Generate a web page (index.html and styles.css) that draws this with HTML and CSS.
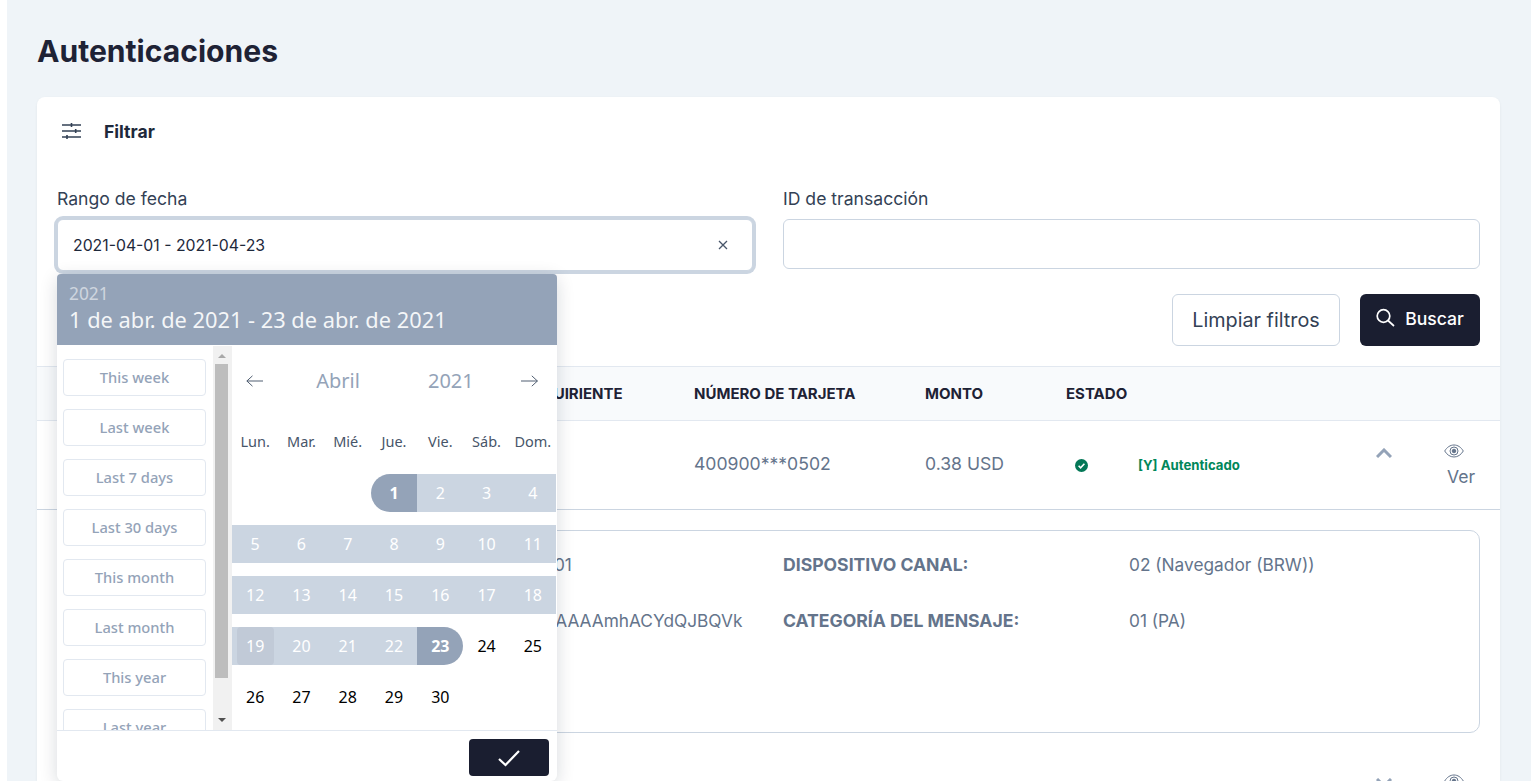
FILE: index.html
```html
<!DOCTYPE html>
<html lang="es">
    <head>
        <meta charset="UTF-8">
        <meta name="viewport" content="width=device-width, initial-scale=1.0">
        <title>Autenticaciones</title>
        <link rel="stylesheet" href="styles.css">
    </head>
    <body>
        <div class="sidebar"></div>
        <main class="main">
            <h1 class="title">Autenticaciones</h1>

            <section class="card">
                <div class="filter-head">
                    <svg class="filter-icon" width="20" height="18" viewBox="0 0 20 18" fill="none" stroke="#334155" stroke-width="1.6">
                        <path d="M0 3h19M0 9h19M0 15h19"/>
                        <path d="M9.500 1v4M13.700 7v4M5 13v4"/>
                    </svg>
                    <span>Filtrar</span>
                </div>

                <div class="filter-form">
                    <div class="field">
                        <label class="field-label">Rango de fecha</label>
                        <div class="input input-focus">
                            <span>2021-04-01 - 2021-04-23</span>
                            <svg width="10" height="10" viewBox="0 0 10 10" stroke="#475569" stroke-width="1.3"><path d="M1 1l8 8M9 1l-8 8"/></svg>
                        </div>

                        <div class="picker">
                            <div class="picker-head">
                                <div class="picker-year">2021</div>
                                <div class="picker-range">1 de abr. de 2021 - 23 de abr. de 2021</div>
                            </div>
                            <div class="picker-body">
                                <div class="shortcuts">
                                    <button class="shortcut">This week</button>
                                    <button class="shortcut">Last week</button>
                                    <button class="shortcut">Last 7 days</button>
                                    <button class="shortcut">Last 30 days</button>
                                    <button class="shortcut">This month</button>
                                    <button class="shortcut">Last month</button>
                                    <button class="shortcut">This year</button>
                                    <button class="shortcut">Last year</button>
                                </div>
                                <div class="scrollbar">
                                    <i class="scroll-up"></i>
                                    <i class="scroll-thumb"></i>
                                    <i class="scroll-down"></i>
                                </div>
                                <div class="calendar">
                                    <div class="cal-nav">
                                        <svg width="20" height="14" viewBox="0 0 20 14" fill="none" stroke="#475569" stroke-width="1.1"><path d="M20 7H1M7.500 1L1 7l6.500 6"/></svg>
                                        <span class="cal-month">Abril</span>
                                        <span class="cal-year">2021</span>
                                        <svg width="20" height="14" viewBox="0 0 20 14" fill="none" stroke="#475569" stroke-width="1.1"><path d="M0 7h19M12.500 1L19 7l-6.500 6"/></svg>
                                    </div>
                                    <div class="cal-week cal-names">
                                        <span>Lun.</span><span>Mar.</span><span>Mié.</span><span>Jue.</span><span>Vie.</span><span>Sáb.</span><span>Dom.</span>
                                    </div>
                                    <div class="cal-week">
                                        <span></span><span></span><span></span>
                                        <span class="day day-start">1</span>
                                        <span class="day in-range">2</span><span class="day in-range">3</span><span class="day in-range">4</span>
                                    </div>
                                    <div class="cal-week">
                                        <span class="day in-range">5</span><span class="day in-range">6</span><span class="day in-range">7</span><span class="day in-range">8</span><span class="day in-range">9</span><span class="day in-range">10</span><span class="day in-range">11</span>
                                    </div>
                                    <div class="cal-week">
                                        <span class="day in-range">12</span><span class="day in-range">13</span><span class="day in-range">14</span><span class="day in-range">15</span><span class="day in-range">16</span><span class="day in-range">17</span><span class="day in-range">18</span>
                                    </div>
                                    <div class="cal-week">
                                        <span class="day in-range"><b class="day-hover">19</b></span><span class="day in-range">20</span><span class="day in-range">21</span><span class="day in-range">22</span>
                                        <span class="day day-end">23</span>
                                        <span class="day">24</span><span class="day">25</span>
                                    </div>
                                    <div class="cal-week">
                                        <span class="day">26</span><span class="day">27</span><span class="day">28</span><span class="day">29</span><span class="day">30</span>
                                    </div>
                                </div>
                            </div>
                            <div class="picker-foot">
                                <button class="picker-ok">
                                    <svg width="24" height="18" viewBox="0 0 24 18" fill="none" stroke="#fff" stroke-width="2.2"><path d="M2 10l6.500 6L22 2"/></svg>
                                </button>
                            </div>
                        </div>
                    </div>
                    <div class="field">
                        <label class="field-label">ID de transacción</label>
                        <div class="input"></div>
                    </div>
                </div>

                <div class="actions">
                    <button class="btn btn-light">Limpiar filtros</button>
                    <button class="btn btn-dark">
                        <svg width="20" height="20" viewBox="0 0 20 20" fill="none" stroke="#fff" stroke-width="1.7"><circle cx="7.500" cy="8" r="6.300"/><path d="M12 12.500l6 5.500"/></svg>
                        <span>Buscar</span>
                    </button>
                </div>

                <div class="table-row table-head">
                    <span class="acquirer">ADQUIRIENTE</span>
                    <span>NÚMERO DE TARJETA</span>
                    <span>MONTO</span>
                    <span>ESTADO</span>
                </div>

                <div class="table-row table-item">
                    <span class="acquirer"></span>
                    <span class="cell-text">400900***0502</span>
                    <span class="cell-text">0.38 USD</span>
                    <div class="status-cell">
                        <svg class="status-icon" width="13" height="13" viewBox="0 0 13 13"><circle cx="6.500" cy="6.500" r="6.500" fill="#047857"/><path d="M3.600 6.800l2 2 3.800-4" fill="none" stroke="#fff" stroke-width="1.6"/></svg>
                        <span class="status-text">[Y] Autenticado</span>
                        <svg class="chevron" width="16" height="10" viewBox="0 0 16 10" fill="none" stroke="#94a3b8" stroke-width="3"><path d="M1 9l7-7 7 7"/></svg>
                        <div class="view-link">
                            <svg width="20" height="14" viewBox="0 0 20 14" fill="none" stroke="#64748b" stroke-width="1"><path d="M.7 7C3 3.200 6.200 1 10 1s7 2.200 9.300 6c-2.300 3.800-5.500 6-9.300 6S3 10.800.7 7z"/><circle cx="10" cy="7" r="4"/><circle cx="10" cy="7" r="1.800" fill="#64748b"/></svg>
                            <span>Ver</span>
                        </div>
                    </div>
                </div>

                <div class="detail-wrap">
                    <div class="detail">
                        <span>2021-04-01</span>
                        <b>DISPOSITIVO CANAL:</b>
                        <span>02 (Navegador (BRW))</span>
                        <span>jHyn+7YFAAAAmhACYdQJBQVk</span>
                        <b>CATEGORÍA DEL MENSAJE:</b>
                        <span>01 (PA)</span>
                    </div>
                </div>

                <div class="table-row table-item">
                    <span class="acquirer"></span>
                    <span></span>
                    <span></span>
                    <div class="status-cell">
                        <span></span>
                        <span></span>
                        <svg class="chevron" width="16" height="10" viewBox="0 0 16 10" fill="none" stroke="#94a3b8" stroke-width="3"><path d="M1 1l7 7 7-7"/></svg>
                        <div class="view-link">
                            <svg width="20" height="14" viewBox="0 0 20 14" fill="none" stroke="#64748b" stroke-width="1"><path d="M.7 7C3 3.200 6.200 1 10 1s7 2.200 9.300 6c-2.300 3.800-5.500 6-9.300 6S3 10.800.7 7z"/><circle cx="10" cy="7" r="4"/><circle cx="10" cy="7" r="1.800" fill="#64748b"/></svg>
                            <span>Ver</span>
                        </div>
                    </div>
                </div>
            </section>
        </main>
    </body>
</html>
```

FILE: styles.css
```css
* {
    box-sizing: border-box;
}

html, body {
    height: 781px;
    overflow: hidden;
}

body {
    margin: 0;
    display: flex;
    background-color: #fff;
    color: #1a1e30;
    font-family: Inter, "Liberation Sans", sans-serif;
    font-size: 17.6px;
}

.sidebar {
    width: 7px;
    flex-shrink: 0;
}

.main {
    flex: 1;
    padding: 0 31px 0 30px;
    background-color: #eff4f8;
}

.title {
    margin: 0;
    padding-top: 33px;
    height: 97px;
    font-size: 30.1px;
    line-height: 36px;
    font-weight: 700;
    color: #1e2235;
}

.card {
    background-color: #fff;
    border-radius: 8px 8px 0 0;
    box-shadow: 0 1px 3px rgba(15, 23, 42, 0.06);
    height: 684px;
    overflow: hidden;
}

/* filter */
.filter-head {
    display: flex;
    align-items: center;
    height: 68px;
    padding: 0 0 0 25px;
    font-weight: 700;
    color: #1e293b;
}

.filter-icon {
    margin-right: 22px;
}

.filter-form {
    display: grid;
    grid-template-columns: 696px 697px;
    gap: 30px;
    padding: 22px 20px 0;
    align-items: start;
}

.field {
    position: relative;
}

.field-label {
    display: block;
    height: 32px;
    line-height: 24px;
    color: #334155;
}

.input {
    display: flex;
    align-items: center;
    justify-content: space-between;
    height: 50px;
    padding: 0 24px 0 15px;
    border: 1px solid #cbd5e1;
    border-radius: 6px;
    background-color: #fff;
    color: #1e293b;
    font-size: 15.8px;
}

.input-focus {
    height: 52px;
    box-shadow: 0 0 0 3px #cbd5e1;
}

.actions {
    display: flex;
    justify-content: flex-end;
    gap: 20px;
    padding: 23px 20px 20px;
}

.btn {
    height: 52px;
    border-radius: 6px;
    font-family: inherit;
}

.btn-light {
    width: 168px;
    border: 1px solid #cbd5e1;
    background-color: #fff;
    color: #334155;
    font-size: 19.8px;
}

.btn-dark {
    display: flex;
    align-items: center;
    justify-content: center;
    gap: 9px;
    width: 120px;
    border: 0;
    background-color: #1a1e30;
    color: #fff;
    font-size: 17.6px;
    font-weight: 500;
    padding-bottom: 5px;
}

/* table */
.table-row {
    display: grid;
    grid-template-columns: 463px 174px 231px 141px 1fr;
    align-items: center;
    padding: 0 20px;
}

.acquirer {
    grid-column: 2;
}

.table-head {
    height: 55px;
    background-color: #f8fafc;
    border-top: 1px solid #e2e8f0;
    border-bottom: 1px solid #e2e8f0;
    font-size: 15px;
    font-weight: 700;
    color: #1e2235;
}

.table-item {
    height: 89px;
    border-bottom: 1px solid #cbd5e1;
    color: #64748b;
}

.cell-text {
    margin-top: -4px;
}

.status-cell {
    display: grid;
    grid-template-columns: 72px 238px 68px 1fr;
    align-items: center;
}

.status-icon {
    margin-left: 9px;
}

.status-text {
    font-size: 13.2px;
    font-weight: 700;
    color: #00875a;
}

.chevron {
    margin-top: -24px;
}

.view-link {
    display: flex;
    flex-direction: column;
    align-items: flex-start;
    gap: 7px;
    margin-top: 3px;
    line-height: 24px;
}

.view-link span {
    margin-left: 3px;
}

.detail-wrap {
    padding: 20px 20px 18px;
}

.detail {
    display: grid;
    grid-template-columns: 306px 346px 1fr;
    row-gap: 32px;
    height: 203px;
    padding: 22px 19px 22px 419px;
    align-content: start;
    border: 1px solid #cbd5e1;
    border-radius: 10px;
    font-size: 17.3px;
    line-height: 24px;
    color: #64748b;
}

.detail b {
    font-size: 17.6px;
}

/* date picker */
.picker {
    position: absolute;
    top: 87px;
    left: 0;
    z-index: 5;
    width: 500px;
    height: 507px;
    background-color: #fff;
    border-radius: 6px;
    box-shadow: 0 4px 18px rgba(15, 23, 42, 0.16);
    font-family: "Noto Sans", "Open Sans", sans-serif;
    font-size: 16px;
}

.picker-head {
    height: 71px;
    padding: 9px 13px 0 12px;
    background-color: #94a3b8;
    border-radius: 4px 4px 0 0;
    color: #fff;
}

.picker-year {
    font-size: 17.3px;
    line-height: 22px;
    opacity: 0.55;
}

.picker-range {
    font-size: 21.8px;
    line-height: 30px;
    opacity: 0.9;
}

.picker-body {
    display: flex;
    height: 385px;
    margin-top: 1px;
    border-bottom: 1px solid #e2e8f0;
}

.shortcuts {
    width: 156px;
    height: 384px;
    overflow: hidden;
    padding: 13px 7px 0 6px;
}

.shortcut {
    display: block;
    width: 143px;
    height: 37px;
    margin-bottom: 13px;
    padding-bottom: 3px;
    border: 1px solid #e2e8f0;
    border-radius: 4px;
    background-color: #fff;
    color: #94a3b8;
    font-family: inherit;
    font-size: 14.7px;
    font-weight: 500;
}

.scrollbar {
    position: relative;
    flex-shrink: 0;
    width: 19px;
    background-color: #f1f1f1;
}

.scroll-thumb {
    position: absolute;
    top: 18px;
    left: 2px;
    width: 13px;
    height: 314px;
    background-color: #bdbdbd;
}

.scroll-up, .scroll-down {
    position: absolute;
    left: 5px;
    width: 0;
    height: 0;
    border-left: 4px solid transparent;
    border-right: 4px solid transparent;
}

.scroll-up {
    top: 8px;
    border-bottom: 4px solid #a8a8a8;
}

.scroll-down {
    top: 372px;
    border-top: 4px solid #505050;
}

.calendar {
    width: 325px;
    border-left: 1px solid #f1f1f1;
    margin-left: -1px;
}

.cal-nav {
    display: flex;
    align-items: center;
    height: 69px;
    padding: 0 18px 0 14px;
    color: #94a3b8;
    font-size: 20px;
}

.cal-month {
    margin-left: 53px;
}

.cal-year {
    margin-left: 68px;
    margin-right: 47px;
}

.cal-week {
    display: grid;
    grid-template-columns: repeat(7, 1fr);
    height: 38px;
    margin-bottom: 13px;
    text-align: center;
}

.cal-names {
    height: 24px;
    margin: 14px 0 21px;
    font-size: 14.5px;
    line-height: 24px;
    color: #475569;
}

.day {
    display: flex;
    align-items: center;
    justify-content: center;
    color: #000;
    font-size: 16px;
}

.in-range {
    background-color: #cbd5e1;
    color: #fff;
}

.day-start, .day-end {
    background-color: #94a3b8;
    color: #fff;
    font-weight: 700;
}

.day-start {
    border-radius: 19px 0 0 19px;
}

.day-end {
    border-radius: 0 19px 19px 0;
}

.day-hover {
    display: flex;
    align-items: center;
    justify-content: center;
    width: 37px;
    height: 38px;
    border-radius: 4px;
    background-color: #c1cad7;
    font-weight: 400;
}

.picker-foot {
    display: flex;
    justify-content: flex-end;
    padding: 8px 8px 0 0;
}

.picker-ok {
    display: flex;
    align-items: center;
    justify-content: center;
    width: 80px;
    height: 37px;
    border: 0;
    border-radius: 4px;
    background-color: #1a1e30;
}
```
